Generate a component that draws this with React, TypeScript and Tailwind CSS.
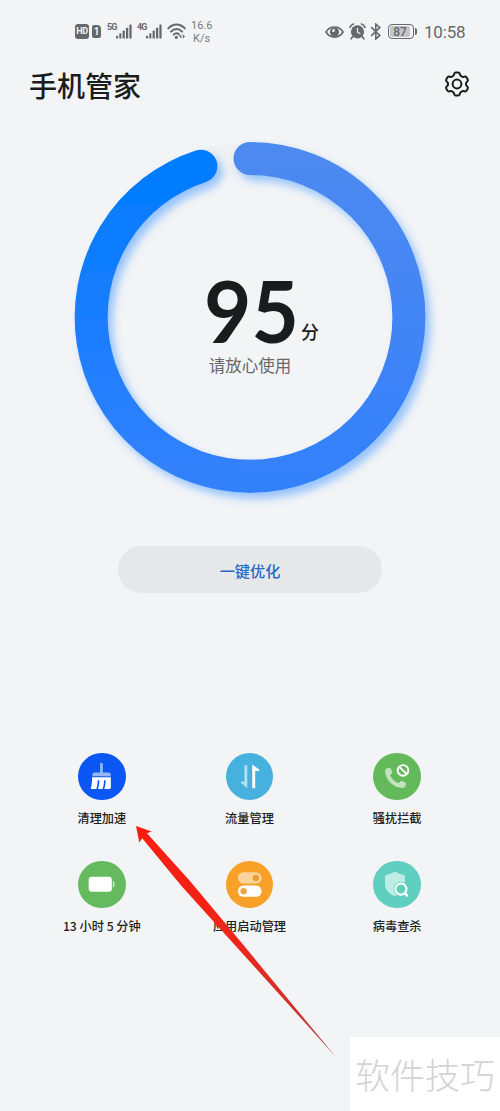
import type { ReactNode } from 'react'
import { clsx } from 'clsx'

type Feature = {
  label: string
  color: string
  icon: ReactNode
}

const SignalBars = ({ label }: { label: string }) => (
  <div className="flex h-[16px] w-[25px] items-start">
    <span className="w-[9px] text-[9px] leading-[8px] font-bold tracking-[-0.8px]">
      {label}
    </span>
    <svg width="17" height="16" viewBox="0 0 17 16" fill="currentColor">
      <rect x="0" y="13" width="2.2" height="3" rx=".6" />
      <rect x="3.500" y="10.500" width="2.200" height="5.500" rx=".6" />
      <rect x="7" y="7.5" width="2.4" height="8.5" rx=".6" />
      <rect x="10.600" y="4.500" width="2.400" height="11.500" rx=".6" />
      <rect x="14.200" y="1" width="2.400" height="15" rx=".6" />
    </svg>
  </div>
)

const WifiIcon = () => (
  <svg
    width="20"
    height="17"
    viewBox="0 0 20 17"
    fill="none"
    stroke="currentColor"
    strokeWidth="2"
    strokeLinecap="round"
  >
    <path d="M1.3 5.4C6.2.3 13 .3 17.8 5.4" />
    <path d="M4 8.6c3.3-3.4 7.8-3.4 11.1 0" />
    <path d="M6.7 11.6c1.8-1.6 3.8-1.6 5.4-.2" />
    <circle cx="9.3" cy="14.4" r="1.6" fill="currentColor" stroke="none" />
    <path
      d="M14.4 11.6v4l-2.3-2zM15.8 11.6v4l2.3-2z"
      fill="currentColor"
      stroke="none"
    />
  </svg>
)

const EyeIcon = () => (
  <svg width="19" height="14" viewBox="0 0 19 14" fill="none">
    <path
      d="M1 7C5 .3 14 .3 18 7 14 13.7 5 13.7 1 7Z"
      stroke="currentColor"
      strokeWidth="1.7"
    />
    <circle cx="9.5" cy="7" r="4.6" fill="currentColor" />
    <path d="M9.700 4v2.800H6.900A2.800 2.800 0 0 1 9.700 4Z" fill="#f2f4f6" />
  </svg>
)

const AlarmIcon = () => (
  <svg width="17" height="17" viewBox="0 0 17 17" fill="none">
    <circle cx="8.5" cy="8.8" r="6.6" fill="currentColor" />
    <path
      d="M1 4.3C1.6 2.6 2.7 1.5 4.5 1M16 4.3c-.6-1.7-1.7-2.8-3.5-3.3M3.8 13.6l-1.7 2.2M13.2 13.6l1.7 2.2"
      stroke="currentColor"
      strokeWidth="1.7"
      strokeLinecap="round"
    />
    <path d="M8.5 5v4.200l2.900 1.600" stroke="#f2f4f6" strokeWidth="1.200" />
  </svg>
)

const BluetoothIcon = () => (
  <svg
    width="12"
    height="17"
    viewBox="0 0 12 17"
    fill="none"
    stroke="currentColor"
    strokeWidth="1.600"
  >
    <path d="M1.200 4.200l8.600 8.200-4 3.500V1.100l4 3.500-8.600 8.200" />
  </svg>
)

const StatusBar = () => (
  <div className="flex h-[60px] items-start pt-[20px] pl-[75px] font-['Roboto',sans-serif] text-[#66686b]">
    <div className="mt-[4px] flex h-[15px] w-[14px] items-center justify-center rounded-[3px] bg-[#66686b] text-[9px] font-bold tracking-[-0.4px] text-[#f2f4f6]">
      HD
    </div>
    <div className="mt-[5px] ml-[3px] flex h-[13px] w-[9px] items-center justify-center rounded-[2px] rounded-tr-[4px] bg-[#66686b] text-[10px] font-bold text-[#f2f4f6]">
      1
    </div>
    <div className="mt-[3px] ml-[6px] flex gap-[5px]">
      <SignalBars label="5G" />
      <SignalBars label="4G" />
    </div>
    <div className="mt-[3px] ml-[5px]">
      <WifiIcon />
    </div>
    <div className="ml-[4px] w-[24px] text-[11px] leading-[12.5px] text-[#77797c]">
      <div>16.6</div>
      <div className="pl-[2px]">K/s</div>
    </div>
    <div className="mt-[5px] ml-[110px]">
      <EyeIcon />
    </div>
    <div className="mt-[3px] ml-[5px]">
      <AlarmIcon />
    </div>
    <div className="mt-[3px] ml-[4px]">
      <BluetoothIcon />
    </div>
    <div className="mt-[4px] ml-[6px] flex items-center gap-[1px]">
      <div className="flex h-[15px] w-[26px] rounded-[4px] border-[1.5px] border-[#66686b] p-[1px]">
        <div className="flex w-[20px] items-center justify-center rounded-[2px] bg-[#c3c5c7] text-[12px] leading-none font-medium">
          87
        </div>
      </div>
      <div className="h-[7px] w-[2px] rounded-r-sm bg-[#66686b]" />
    </div>
    <div className="mt-[2px] ml-[7px] text-[17px] leading-[20px] tracking-[-0.2px]">
      10:58
    </div>
  </div>
)

const SettingsIcon = () => (
  <svg
    width="28"
    height="28"
    viewBox="0 0 28 28"
    fill="none"
    stroke="#1b1c1e"
    strokeWidth="2"
    strokeLinejoin="round"
  >
    <path d="M12.6 2.600h2.800q.9 0 1.200.9l.5 1.400q.3.800 1.100 1.200l.8.500q.700.400 1.500.300l1.500-.3q.9-.2 1.400.6l1.400 2.400q.4.800-.2 1.500l-1 1.100q-.6.600-.6 1.400v.8q0 .8.600 1.400l1 1.100q.600.700.200 1.500l-1.400 2.400q-.5.800-1.400.6l-1.500-.3q-.8-.1-1.500.3l-.8.500q-.8.400-1.100 1.200l-.5 1.400q-.3.900-1.200.9h-2.800q-.9 0-1.200-.9l-.5-1.400q-.3-.8-1.100-1.200l-.8-.5q-.7-.4-1.500-.3l-1.500.3q-.9.200-1.400-.6l-1.400-2.400q-.4-.8.2-1.500l1-1.100q.6-.6.6-1.400v-.8q0-.8-.6-1.400l-1-1.100q-.6-.7-.2-1.500l1.400-2.400q.5-.8 1.400-.6l1.500.3q.8.100 1.500-.3l.8-.5q.8-.4 1.100-1.200l.5-1.400q.3-.9 1.200-.9z" />
    <circle cx="14" cy="14" r="4.4" />
  </svg>
)

// 342 degrees of arc, clockwise from the top, split at the bottom
// so that each half carries its own gradient
const ScoreRing = () => (
  <svg
    className="col-start-1 row-start-1"
    width="380"
    height="380"
    viewBox="0 0 380 380"
    fill="none"
  >
    <defs>
      <linearGradient
        id="ringRight"
        gradientUnits="userSpaceOnUse"
        x1="190"
        y1="12"
        x2="190"
        y2="346"
      >
        <stop offset="0" stopColor="#4e8af0" />
        <stop offset=".5" stopColor="#4385f5" />
        <stop offset="1" stopColor="#3381fb" />
      </linearGradient>
      <linearGradient
        id="ringLeft"
        gradientUnits="userSpaceOnUse"
        x1="190"
        y1="346"
        x2="190"
        y2="36"
      >
        <stop offset="0" stopColor="#3381fb" />
        <stop offset=".5" stopColor="#1a7dff" />
        <stop offset="1" stopColor="#007cff" />
      </linearGradient>
      <filter id="ringShadow" x="-10%" y="-10%" width="120%" height="120%">
        <feDropShadow
          dx="5"
          dy="6"
          stdDeviation="4"
          floodColor="#4c9bff"
          floodOpacity=".55"
        />
      </filter>
    </defs>
    <circle cx="190" cy="187.300" r="158.900" stroke="#eef1f3" strokeWidth="32" />
    <g filter="url(#ringShadow)" strokeWidth="33" strokeLinecap="round">
      <path
        d="M190 346.200A158.900 158.900 0 0 1 140.900 36.200"
        stroke="url(#ringLeft)"
      />
      <path
        d="M190 28.400A158.900 158.900 0 0 1 190 346.200"
        stroke="url(#ringRight)"
      />
    </g>
  </svg>
)

const features: Feature[] = [
  {
    label: '清理加速',
    color: 'bg-[#0b57f5]',
    icon: (
      <>
        <path
          d="M22.300 11.300a1.400 1.400 0 0 1 2.800 0v8.500h6a2 2 0 0 1 2 2v1.700H14.600v-1.700a2 2 0 0 1 2-2h5.700z"
          fill="#95b6fb"
        />
        <path
          d="M14.200 24.600h19v9.900a2 2 0 0 1-2 2H12.800c1-3.500 1.400-7 1.400-11.900z"
          fill="#fff"
        />
        <path
          d="M20.800 27.500c0 3.700-.5 6.200-1.600 9.300M27.200 27.500c0 3.700-.5 6.200-1.600 9.300"
          stroke="#0b57f5"
          strokeWidth="1.700"
        />
      </>
    ),
  },
  {
    label: '流量管理',
    color: 'bg-[#46b1df]',
    icon: (
      <>
        <path
          d="M18.600 12.300h2.900v23.200l-6.300-5.300v-1.500h3.400z"
          fill="#b2dff2"
        />
        <path d="M26.500 11.600l7 5.200v1.400h-4V35.500h-3z" fill="#fff" />
      </>
    ),
  },
  {
    label: '骚扰拦截',
    color: 'bg-[#64b95b]',
    icon: (
      <>
        <path
          d="M14.300 19c.7 7.300 7.700 14.200 15.200 14.200"
          stroke="#c1e3bd"
          strokeWidth="4"
        />
        <rect
          x="12.600"
          y="15"
          width="6.400"
          height="7.200"
          rx="3"
          fill="#c1e3bd"
          transform="rotate(-20 15.800 18.600)"
        />
        <rect
          x="26"
          y="28.700"
          width="7.200"
          height="6.400"
          rx="3"
          fill="#c1e3bd"
          transform="rotate(20 29.600 31.900)"
        />
        <circle cx="30.300" cy="17.600" r="5.400" stroke="#fff" strokeWidth="1.900" />
        <path d="M26.600 14l7.400 7.200" stroke="#fff" strokeWidth="1.900" />
      </>
    ),
  },
  {
    label: '13 小时 5 分钟',
    color: 'bg-[#65b95e]',
    icon: (
      <>
        <rect x="10.800" y="16" width="23.400" height="15" rx="3" fill="#fff" />
        <path d="M35.200 20.200c2.500 0 2.500 6.600 0 6.600z" fill="#c5e5c2" />
      </>
    ),
  },
  {
    label: '应用启动管理',
    color: 'bg-[#f7a128]',
    icon: (
      <>
        <rect x="12" y="11.400" width="24" height="11.400" rx="5.700" fill="#fbd49a" />
        <circle cx="30.100" cy="17.100" r="3.200" fill="#ed9b2c" />
        <rect x="12" y="24.800" width="24" height="11.400" rx="5.700" fill="#fff" />
        <circle cx="17.800" cy="30.500" r="3.200" fill="#eca44b" />
      </>
    ),
  },
  {
    label: '病毒查杀',
    color: 'bg-[#61cfbf]',
    icon: (
      <>
        <path
          d="M22.200 10.800q.8 0 1.500.5 3.200 2.200 7 2.700 1.600.2 1.600 1.800v7.500c0 6-4.200 10.200-10.100 12.200-5.900-2-10-6.200-10-12.200v-7.500q0-1.600 1.600-1.800 3.800-.5 6.900-2.700.700-.5 1.500-.5z"
          fill="#bdece4"
        />
        <circle cx="28.200" cy="28.400" r="7.400" fill="#61cfbf" />
        <circle cx="28.200" cy="28.400" r="5.600" stroke="#fff" strokeWidth="2" />
        <path
          d="M32.200 32.600l2.200 2.400"
          stroke="#fff"
          strokeWidth="2.300"
          strokeLinecap="round"
        />
      </>
    ),
  },
]

const FeatureItem = ({ label, color, icon }: Feature) => (
  <div className="flex flex-col items-center">
    <div className={clsx('h-[47.5px] w-[47.5px] rounded-full', color)}>
      <svg width="47.5" height="47.5" viewBox="0 0 48 48" fill="none">
        {icon}
      </svg>
    </div>
    <span className="mt-[8px] text-[12.2px] leading-[20px] font-medium whitespace-nowrap text-[#1d1e20]">
      {label}
    </span>
  </div>
)

const App = () => {
  return (
    <div className="relative flex h-[1111px] w-[500px] flex-col overflow-hidden bg-[#f2f4f6] font-['Noto_Sans_CJK_SC',sans-serif]">
      <StatusBar />
      <header className="flex h-[50px] items-center justify-between pr-[29px] pl-[29px]">
        <h1 className="text-[28px] leading-[40px] font-medium text-[#1b1c1e]">
          手机管家
        </h1>
        <div className="-mt-[2px]">
          <SettingsIcon />
        </div>
      </header>

      <main className="flex flex-col items-center pt-[20px]">
        <div className="grid h-[380px] w-[380px]">
          <ScoreRing />
          <div className="col-start-1 row-start-1 flex flex-col items-center pt-[136px]">
            <div className="flex items-end pl-[20px]">
              <span className="origin-center scale-x-[0.94] font-['Lato',sans-serif] text-[87px] leading-[87px] font-bold text-[#1a1b1d]">
                95
              </span>
              <span className="-ml-[1px] mb-[8px] text-[18px] leading-[28px] font-medium text-[#1a1b1d]">
                分
              </span>
            </div>
            <p className="text-[16.5px] leading-[24px] text-[#66686a]">
              请放心使用
            </p>
          </div>
        </div>
        <button className="mt-[36px] h-[47px] w-[264px] rounded-full bg-[#e6e7e9] pt-[1px] text-[15.2px] font-medium text-[#2866c8]">
          一键优化
        </button>
      </main>

      <section className="mt-[159.5px] grid grid-cols-3 gap-y-[32.5px] pr-[29px] pl-[28px]">
        {features.map((feature) => (
          <FeatureItem key={feature.label} {...feature} />
        ))}
      </section>

      {/* Pointer towards the cleanup entry */}
      <svg
        className="absolute top-[820px] left-[130px]"
        width="210"
        height="240"
        viewBox="0 0 210 240"
      >
        <defs>
          <linearGradient id="pointer" x1="0" y1="0" x2="1" y2="1">
            <stop offset="0" stopColor="#fb1c10" />
            <stop offset=".5" stopColor="#f0251a" />
            <stop offset="1" stopColor="#b93a35" />
          </linearGradient>
        </defs>
        <path
          d="M6 6L21.700 11.500 17 13.300 59.500 60.500 105.500 115.500 205.700 236.700 98 117.500 51.500 66 12.200 18.300 9.300 22.500z"
          fill="url(#pointer)"
        />
      </svg>

      <div className="absolute right-0 bottom-0 flex h-[74px] w-[150px] items-center justify-center bg-white text-[35px] font-light whitespace-nowrap text-[#d3d3d3]">
        软件技巧
      </div>
    </div>
  )
}

export default App
